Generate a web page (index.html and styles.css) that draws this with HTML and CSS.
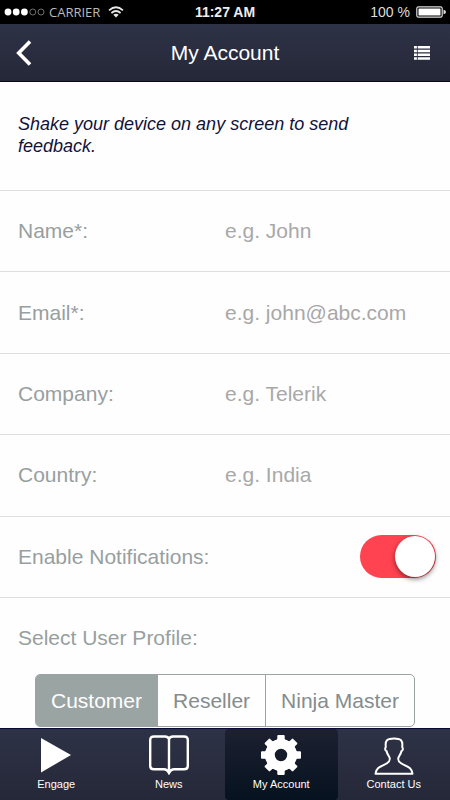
FILE: index.html
```html
<!DOCTYPE html>
<html lang="en">
<head>
<meta charset="utf-8">
<meta name="viewport" content="width=device-width, initial-scale=1">
<title>My Account</title>
<link rel="stylesheet" href="styles.css">
</head>
<body>
<div class="status">
  <div class="status-left">
    <svg width="41" height="8" viewBox="0 0 41 8" aria-hidden="true">
      <g fill="#fff"><circle cx="4" cy="4" r="3.4"/><circle cx="12.2" cy="4" r="3.4"/><circle cx="20.4" cy="4" r="3.4"/></g>
      <g fill="none" stroke="#888" stroke-width=".8"><circle cx="28.8" cy="4" r="3"/><circle cx="37" cy="4" r="3"/></g>
    </svg>
    <span class="carrier">CARRIER</span>
    <svg width="16" height="12" viewBox="0 0 16 12" fill="none" stroke="#e8e8e8" stroke-width="1.7" aria-hidden="true">
      <path d="M1 4.3Q8-1.8 15 4.3M3.4 7Q8 3 12.6 7"/><path d="M5.3 8.7Q8 6.6 10.7 8.7L8 11.6Z" fill="#e8e8e8" stroke="none"/>
    </svg>
  </div>
  <span class="time">11:27 AM</span>
  <div class="status-right">
    <span>100 %</span>
    <svg width="30" height="12" viewBox="0 0 30 12" aria-hidden="true">
      <rect x=".8" y=".8" width="25.4" height="10.4" rx="1.6" fill="none" stroke="#ddd" stroke-width="1.2"/>
      <rect x="2.5" y="2.5" width="22" height="7" rx=".5" fill="#fff"/>
      <path d="M27.5 3.8Q30 4 30 6T27.5 8.2Z" fill="#ddd"/>
    </svg>
  </div>
</div>
<header class="navbar">
  <button class="nav-button" type="button" aria-label="Back">
    <svg width="16" height="26" viewBox="0 0 16 26" fill="none" stroke="#fff" stroke-width="3.6" stroke-linejoin="miter"><path d="M14 1.5 2.7 13 14 24.5"/></svg>
  </button>
  <h1>My Account</h1>
  <button class="nav-button end" type="button" aria-label="Menu">
    <svg width="16" height="14" viewBox="0 0 16 14" fill="#fff"><path d="M0 0h2.9v2.6H0zM3.7 0H16v2.6H3.7zM0 3.7h2.9v2.6H0zM3.7 3.7H16v2.6H3.7zM0 7.4h2.9V10H0zM3.7 7.4H16V10H3.7zM0 11.2h2.9v2.6H0zM3.7 11.2H16v2.6H3.7z"/></svg>
  </button>
</header>
<main>
  <form class="form">
    <p class="intro">Shake your device on any screen to send feedback.</p>
    <div class="row"><label for="name">Name*:</label><input class="field" id="name" type="text" placeholder="e.g. John"></div>
    <div class="row"><label for="email">Email*:</label><input class="field" id="email" type="email" placeholder="e.g. john@abc.com"></div>
    <div class="row"><label for="company">Company:</label><input class="field" id="company" type="text" placeholder="e.g. Telerik"></div>
    <div class="row"><label for="country">Country:</label><input class="field" id="country" type="text" placeholder="e.g. India"></div>
    <div class="row"><label for="notify">Enable Notifications:</label><input class="switch" id="notify" type="checkbox" checked></div>
    <fieldset class="profile">
      <legend>Select User Profile:</legend>
      <div class="segments">
        <label><input type="radio" name="profile" checked><span>Customer</span></label>
        <label><input type="radio" name="profile"><span>Reseller</span></label>
        <label><input type="radio" name="profile"><span>Ninja Master</span></label>
      </div>
    </fieldset>
  </form>
</main>
<nav class="tabbar">
  <a href="#engage">
    <svg width="40" height="40" viewBox="0 0 40 40" fill="#fff" aria-hidden="true"><path d="M5 3 35 20 5 37.500Z"/></svg>
    <span>Engage</span>
  </a>
  <a href="#news">
    <svg width="40" height="40" viewBox="0 0 40 40" fill="none" stroke="#fff" stroke-width="2.4" aria-hidden="true"><path d="M20 4Q19 1.500 16 1.500H5Q1.200 1.500 1.200 5V31Q1.200 34.300 5 34.300H15Q18 34.300 20 38Q22 34.300 25 34.300H35Q38.800 34.300 38.800 31V5Q38.800 1.500 35 1.500H24Q21 1.500 20 4ZV37"/></svg>
    <span>News</span>
  </a>
  <a href="#account" class="active" aria-current="page">
    <svg width="40" height="40" viewBox="-20 -20 40 40" fill="#fff" aria-hidden="true">
      <defs><path id="tooth" d="M-5.500-13-3.700-16V-19Q-3.700-20-2.700-20H2.700Q3.700-20 3.700-19V-16L5.500-13Z"/></defs>
      <use href="#tooth"/><use href="#tooth" transform="rotate(45)"/><use href="#tooth" transform="rotate(90)"/><use href="#tooth" transform="rotate(135)"/><use href="#tooth" transform="rotate(180)"/><use href="#tooth" transform="rotate(225)"/><use href="#tooth" transform="rotate(270)"/><use href="#tooth" transform="rotate(315)"/>
      <path fill-rule="evenodd" d="M0-16A16 16 0 0 1 0 16A16 16 0 0 1 0-16ZM0-6.200A6.200 6.200 0 0 0 0 6.200A6.200 6.200 0 0 0 0-6.200Z"/>
    </svg>
    <span>My Account</span>
  </a>
  <a href="#contact">
    <svg width="40" height="40" viewBox="0 0 40 40" fill="none" stroke="#fff" stroke-width="2" stroke-linejoin="round" aria-hidden="true"><path d="M1.500 38.800C2 33.500 5.500 31.800 10 29.800C14.500 27.800 16 26.500 15.800 23.500C15.500 21.300 13.200 19.500 12.600 16.200C11 15.300 10.700 13.500 11.800 12C11 5.500 13 3.500 20 3.500S29 5.500 28.200 12C29.300 13.500 29 15.300 27.400 16.200C26.800 19.500 24.500 21.300 24.200 23.500C24 26.500 25.500 27.800 30 29.800C34.500 31.800 38 33.500 38.500 38.800Z"/></svg>
    <span>Contact Us</span>
  </a>
</nav>
</body>
</html>
```
FILE: styles.css
```css
* { box-sizing: border-box; }

body {
  margin: 0;
  min-height: 100vh;
  display: flex;
  flex-direction: column;
  background: #fefefe;
  color: #989f9f;
  font: 21px/24px "Liberation Sans", Arial, sans-serif;
}

svg { display: block; }

.status {
  display: grid;
  grid-template-columns: 1fr auto 1fr;
  align-items: center;
  height: 24px;
  padding: 0 4px;
  background: #000;
  color: #ddd;
  font-size: 14px;
}

.status-left,
.status-right {
  display: flex;
  align-items: center;
  gap: 4px;
}

.status-right { gap: 6px; justify-content: flex-end; }
.carrier { margin-right: 4px; font-family: "Open Sans", sans-serif; font-size: 13px; color: #bbb; }
.time { color: #eee; font-weight: bold; }

.navbar {
  display: grid;
  grid-template-columns: 48px 1fr 48px;
  align-items: center;
  height: 58px;
  background: linear-gradient(#2e3246, #252838);
  border-bottom: 1px solid #06082c;
}

.navbar h1 {
  margin: 0;
  color: #fff;
  font-size: 21px;
  font-weight: normal;
  text-align: center;
}

.nav-button {
  display: flex;
  padding: 0 16px;
  border: 0;
  background: none;
}

.nav-button.end { justify-content: flex-end; padding: 0 20px 0 0; }

main { flex: 1; display: flex; }
.form { flex: 1; display: flex; flex-direction: column; }

.intro {
  margin: 0;
  padding: 31px 64px 33px 18px;
  border-bottom: 1px solid #dedede;
  color: #10123a;
  font-size: 18px;
  line-height: 22px;
  font-style: italic;
}

.row {
  flex: 1;
  display: flex;
  align-items: center;
  justify-content: space-between;
  min-height: 81px;
  padding: 0 14px 0 18px;
  border-bottom: 1px solid #dedede;
}

.field {
  width: 211px;
  height: 48px;
  padding: 0;
  border: 0;
  outline: 0;
  background: none;
  color: #555;
  font: inherit;
}

.field::placeholder { color: #a8a8a8; opacity: 1; }

.switch {
  appearance: none;
  display: flex;
  justify-content: flex-start;
  width: 76px;
  height: 43px;
  margin: 0;
  padding: 1px;
  border-radius: 22px;
  background: #ccc;
}

.switch::before {
  content: "";
  width: 40px;
  height: 41px;
  border-radius: 50%;
  background: #fff;
  box-shadow: 0 2px 5px rgba(0, 0, 0, 0.5);
}

.switch:checked { justify-content: flex-end; background: #ff4350; }

.profile {
  min-width: 0;
  margin: 0;
  padding: 0 35px 1px;
  border: 0;
}

.profile legend {
  margin-left: -17px;
  padding: 28px 0 24px;
}

.segments {
  display: flex;
  overflow: hidden;
  border: 1px solid #9aa4a3;
  border-radius: 5px;
  color: #858c8d;
}

.segments label { flex: auto; }
.segments label + label { border-left: 1px solid #9aa4a3; }
.segments input { position: absolute; opacity: 0; }

.segments span {
  display: block;
  padding: 14px 8px 13px;
  text-align: center;
}

.segments input:checked + span { background: #9aa4a3; color: #fff; }

.tabbar {
  position: sticky;
  bottom: 0;
  display: grid;
  grid-template-columns: repeat(4, 1fr);
  height: 72px;
  border-top: 1px solid #08083a;
  background: linear-gradient(#2e3246, #252838);
}

.tabbar a {
  display: flex;
  flex-direction: column;
  align-items: center;
  gap: 1px;
  padding-top: 6px;
  border-radius: 4px;
  color: #fff;
  font-size: 11px;
  line-height: 16px;
  text-decoration: none;
}

.tabbar .active { background: linear-gradient(#1d2030, #06121f); }
```
